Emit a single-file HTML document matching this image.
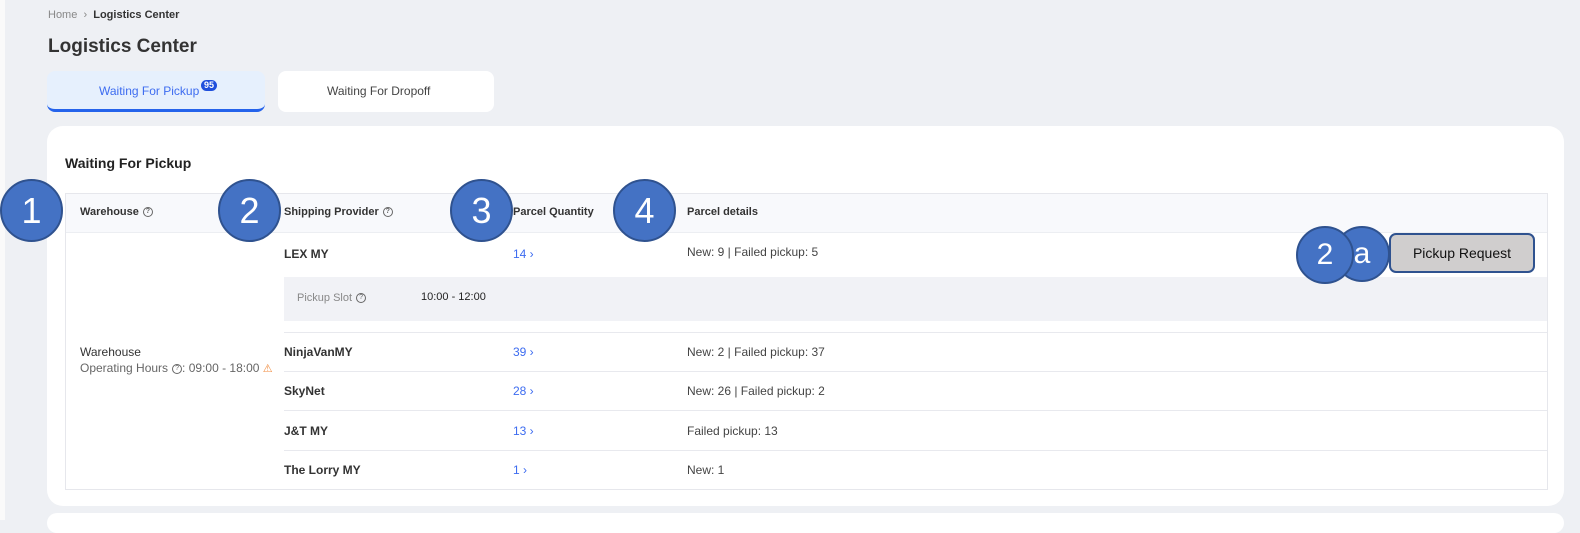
<!DOCTYPE html>
<html><head><style>
*{margin:0;padding:0;box-sizing:border-box}
body{width:1580px;height:520px;background:#eef0f4;font-family:"Liberation Sans",sans-serif;position:relative;overflow:hidden;color:#333}
.a{position:absolute;white-space:nowrap}
.c{position:absolute;border-radius:50%;background:#4472c4;border:2px solid #2f528f;color:#fff;font-family:"Liberation Sans",sans-serif;display:flex;align-items:center;justify-content:center;font-size:36px}
.q{display:inline-block;width:10px;height:10px;border:1px solid #666;border-radius:50%;font-size:7px;line-height:8px;text-align:center;vertical-align:middle;margin-left:4px;color:#666}
.line{position:absolute;left:284px;width:1263px;height:1px;background:#e8e9ee}
.num{color:#3d6cf0;font-size:12px}
.b{font-weight:bold;font-size:12px;color:#333}
.s{font-size:12px;color:#444}
</style></head><body>
<div class="a" style="left:0;top:0;width:5px;height:520px;background:#fafafa"></div>
<div class="a" style="left:48px;top:9px;font-size:11px;color:#888">Home &nbsp;›&nbsp; <span style="color:#333;font-weight:bold">Logistics Center</span></div>
<div class="a" style="left:48px;top:36px;font-size:19px;font-weight:bold;color:#333">Logistics Center</div>
<div class="a" style="left:47px;top:71px;width:218px;height:41px;background:#e6f0fd;border-radius:8px;border-bottom:3px solid #2563eb"></div>
<div class="a" style="left:99px;top:84px;font-size:12px;line-height:14px;color:#3d6cf0">Waiting For Pickup</div>
<div class="a" style="left:201px;top:80px;background:#1f4fdc;color:#fff;border-radius:8px;font-size:9px;line-height:11px;font-weight:bold;padding:0 3px">95</div>
<div class="a" style="left:278px;top:71px;width:216px;height:41px;background:#fff;border-radius:8px"></div>
<div class="a" style="left:327px;top:84px;font-size:12px;color:#444">Waiting For Dropoff</div>
<div class="a" style="left:47px;top:126px;width:1517px;height:380px;background:#fff;border-radius:16px"></div>
<div class="a" style="left:47px;top:513px;width:1517px;height:20px;background:#fff;border-radius:16px"></div>
<div class="a" style="left:65px;top:155px;font-size:14px;font-weight:bold;color:#222">Waiting For Pickup</div>
<div class="a" style="left:65px;top:193px;width:1483px;height:297px;border:1px solid #e6e7ec"></div>
<div class="a" style="left:66px;top:194px;width:1481px;height:39px;background:#f8f9fc;border-bottom:1px solid #eceef2"></div>
<div class="a b" style="left:80px;top:206px;font-size:11px">Warehouse<span class="q">?</span></div>
<div class="a b" style="left:284px;top:206px;font-size:11px">Shipping Provider<span class="q">?</span></div>
<div class="a b" style="left:513px;top:206px;font-size:11px">Parcel Quantity</div>
<div class="a b" style="left:687px;top:206px;font-size:11px">Parcel details</div>
<div class="a b" style="left:284px;top:247px">LEX MY</div>
<div class="a num" style="left:513px;top:247px">14 ›</div>
<div class="a s" style="left:687px;top:245px">New: 9 | Failed pickup: 5</div>
<div class="a" style="left:284px;top:277px;width:1263px;height:44px;background:#f1f2f6"></div>
<div class="a" style="left:297px;top:292px;font-size:11px;color:#888">Pickup Slot<span class="q">?</span></div>
<div class="a" style="left:421px;top:291px;font-size:11px;color:#222">10:00 - 12:00</div>
<div class="line" style="top:332px"></div>
<div class="a b" style="left:284px;top:345px">NinjaVanMY</div>
<div class="a num" style="left:513px;top:345px">39 ›</div>
<div class="a s" style="left:687px;top:345px">New: 2 | Failed pickup: 37</div>
<div class="line" style="top:371px"></div>
<div class="a b" style="left:284px;top:384px">SkyNet</div>
<div class="a num" style="left:513px;top:384px">28 ›</div>
<div class="a s" style="left:687px;top:384px">New: 26 | Failed pickup: 2</div>
<div class="line" style="top:410px"></div>
<div class="a b" style="left:284px;top:424px">J&amp;T MY</div>
<div class="a num" style="left:513px;top:424px">13 ›</div>
<div class="a s" style="left:687px;top:424px">Failed pickup: 13</div>
<div class="line" style="top:450px"></div>
<div class="a b" style="left:284px;top:463px">The Lorry MY</div>
<div class="a num" style="left:513px;top:463px">1 ›</div>
<div class="a s" style="left:687px;top:463px">New: 1</div>
<div class="a" style="left:80px;top:345px;font-size:12px;color:#333">Warehouse</div>
<div class="a" style="left:80px;top:361px;font-size:12px;color:#666">Operating Hours<span class="q">?</span>: 09:00 - 18:00 <span style="color:#f08a3c;font-size:11px">⚠</span></div>
<div class="c" style="left:0;top:179px;width:63px;height:63px">1</div>
<div class="c" style="left:218px;top:179px;width:63px;height:63px">2</div>
<div class="c" style="left:450px;top:179px;width:63px;height:63px">3</div>
<div class="c" style="left:613px;top:179px;width:63px;height:63px">4</div>
<div class="c" style="left:1334px;top:226px;width:56px;height:56px;font-size:30px">a</div>
<div class="c" style="left:1296px;top:226px;width:58px;height:58px;font-size:30px">2</div>
<div class="a" style="left:1389px;top:233px;width:146px;height:40px;background:#d0cece;border:2px solid #2f528f;border-radius:7px;font-size:14px;color:#111;display:flex;align-items:center;justify-content:center">Pickup Request</div>
</body></html>
